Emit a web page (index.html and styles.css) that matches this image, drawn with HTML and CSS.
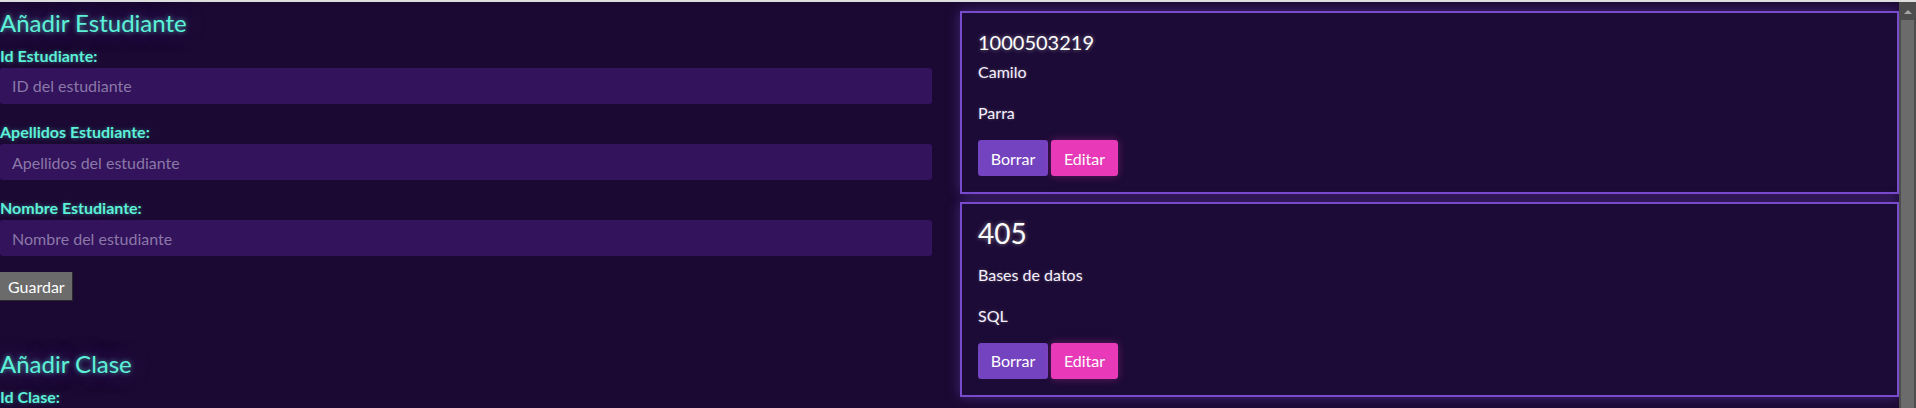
FILE: index.html
```html
<!DOCTYPE html>
<html lang="es">
<head>
<meta charset="utf-8">
<title>Estudiantes y Clases</title>
<link rel="stylesheet" href="styles.css">
</head>
<body>
<div class="topline"></div>
<div class="window">
  <div class="app">
    <section class="forms">
      <form class="form">
        <h2 class="form-title">Añadir Estudiante</h2>
        <div class="field">
          <label class="field-label" for="idEst">Id Estudiante:</label>
          <input class="field-input" id="idEst" type="text" placeholder="ID del estudiante">
        </div>
        <div class="field">
          <label class="field-label" for="apeEst">Apellidos Estudiante:</label>
          <input class="field-input" id="apeEst" type="text" placeholder="Apellidos del estudiante">
        </div>
        <div class="field field-last">
          <label class="field-label" for="nomEst">Nombre Estudiante:</label>
          <input class="field-input" id="nomEst" type="text" placeholder="Nombre del estudiante">
        </div>
        <button class="btn-save" type="button">Guardar</button>
      </form>
      <form class="form form-next">
        <h2 class="form-title">Añadir Clase</h2>
        <div class="field">
          <label class="field-label" for="idCla">Id Clase:</label>
          <input class="field-input" id="idCla" type="text" placeholder="ID de la clase">
        </div>
        <div class="field">
          <label class="field-label" for="nomCla">Nombre Clase:</label>
          <input class="field-input" id="nomCla" type="text" placeholder="Nombre de la clase">
        </div>
        <div class="field field-last">
          <label class="field-label" for="desCla">Descripción Clase:</label>
          <input class="field-input" id="desCla" type="text" placeholder="Descripción de la clase">
        </div>
        <button class="btn-save" type="button">Guardar</button>
      </form>
    </section>
    <section class="list">
      <article class="card">
        <h3 class="card-title card-title-sm">1000503219</h3>
        <p class="card-text">Camilo</p>
        <p class="card-text">Parra</p>
        <div class="card-actions">
          <button class="btn btn-delete" type="button">Borrar</button>
          <button class="btn btn-edit" type="button">Editar</button>
        </div>
      </article>
      <article class="card">
        <h3 class="card-title card-title-lg">405</h3>
        <p class="card-text">Bases de datos</p>
        <p class="card-text">SQL</p>
        <div class="card-actions">
          <button class="btn btn-delete" type="button">Borrar</button>
          <button class="btn btn-edit" type="button">Editar</button>
        </div>
      </article>
    </section>
  </div>
  <div class="scrollbar" aria-hidden="true">
    <div class="sb-button"><span class="sb-arrow"></span></div>
    <div class="sb-thumb"></div>
  </div>
</div>
</body>
</html>
```

FILE: styles.css
```css
* { box-sizing: border-box; }

html, body {
  margin: 0;
  height: 100%;
}

body {
  background: #1b0933;
  overflow: hidden;
  font-family: Lato, "Noto Sans", sans-serif;
}

.topline {
  height: 2px;
  background: #dedede;
}

.window {
  display: flex;
  height: calc(100% - 2px);
}

.app {
  flex: 1;
  min-width: 0;
  overflow: hidden;
  display: grid;
  grid-template-columns: 932px 1fr;
  align-items: start;
}

/* ---------- scrollbar ---------- */
.scrollbar {
  width: 17px;
  flex: none;
  display: flex;
  flex-direction: column;
  background: #4d4d4d;
}

.sb-button {
  height: 18px;
  flex: none;
  display: flex;
  justify-content: center;
  padding-top: 8px;
}

.sb-arrow {
  width: 0;
  height: 0;
  border-left: 4px solid transparent;
  border-right: 4px solid transparent;
  border-bottom: 4px solid #a6a6a6;
}

.sb-thumb {
  flex: 1;
  margin: 0 2px;
  background: #6b6b6b;
}

/* ---------- forms ---------- */
.form {
  display: flow-root;
}

.form-title {
  margin: 6.5px 0 8.5px;
  font-size: 24px;
  font-weight: 400;
  line-height: 1.2;
  color: #5cf1d8;
  text-shadow: 0 0 5px rgba(92, 241, 216, 0.6), 0 0 20px rgba(140, 90, 220, 0.5);
}

.field {
  margin-bottom: 18px;
}

.field-last {
  margin-bottom: 16px;
}

.field-label {
  display: block;
  margin-bottom: 3px;
  font-size: 16px;
  font-weight: 700;
  line-height: 1.2;
  color: #5cf1d8;
  text-shadow: 0 0 4px rgba(92, 241, 216, 0.4);
}

.field-input {
  display: block;
  width: 100%;
  height: 36px;
  margin: 0;
  padding: 0 12px;
  border: none;
  border-radius: 3px;
  background: #32135c;
  color: #ffffff;
  font-family: Lato, "Noto Sans", sans-serif;
  font-size: 16px;
  outline: none;
}

.field-input::placeholder {
  color: #8c78a8;
}

.btn-save {
  display: block;
  height: 29px;
  padding: 0 7px 0 8px;
  border: none;
  border-right: 1px solid #2a2a2a;
  border-bottom: 1px solid #2a2a2a;
  background: #6b6b6b;
  color: #ffffff;
  font-family: Lato, "Noto Sans", sans-serif;
  font-size: 16px;
}

.form-next {
  margin-top: 42px;
}

/* ---------- list ---------- */
.list {
  padding: 9px 0 0 28px;
}

.card {
  margin-bottom: 8px;
  padding: 0 16px 16px;
  border: 2px solid #784bcd;
  background: #1c0b36;
  box-shadow: 0 0 12px rgba(120, 75, 205, 0.45);
}

.card-title {
  font-weight: 400;
  line-height: 1.2;
  color: #ffffff;
  text-shadow: 0 0 4px rgba(255, 255, 255, 0.45);
}

.card-title-sm {
  margin: 16.6px 0 8.8px;
  font-size: 20px;
}

.card-title-lg {
  margin: 12.4px 0 14.7px;
  font-size: 28px;
}

.card-text {
  margin: 0;
  font-size: 16px;
  line-height: 1.2;
  color: #f6f0ff;
  text-shadow: 0 0 3px rgba(255, 255, 255, 0.3);
}

.card-text + .card-text {
  margin-top: 21.5px;
}

.card-actions {
  display: flex;
  gap: 3px;
  margin-top: 18px;
}

.btn {
  height: 36px;
  padding: 0 12px;
  border: none;
  border-radius: 3px;
  color: #ffffff;
  font-family: Lato, "Noto Sans", sans-serif;
  font-size: 16px;
}

.btn-delete {
  min-width: 70px;
  background: #7443c0;
}

.btn-edit {
  min-width: 67px;
  background: #e83ab8;
  box-shadow: 0 0 8px rgba(232, 58, 184, 0.35);
}
```
